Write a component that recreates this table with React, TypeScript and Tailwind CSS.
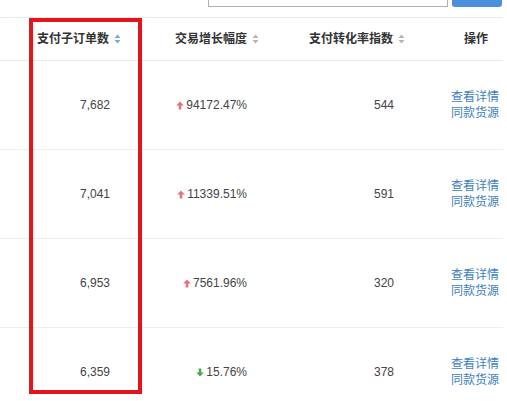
import React from "react";

const font = { fontFamily: '"Liberation Sans", "Noto Sans CJK SC", sans-serif' };

function Sort({ active }: { active?: boolean }) {
  return (
    <svg width="7" height="10" viewBox="0 0 7 10" className="ml-[5px]">
      <path d="M3.5 0.5 L6.5 4 L0.5 4 Z" fill={active ? "#7aa7d6" : "#b5b5b5"} />
      <path d="M3.5 9.5 L6.5 6 L0.5 6 Z" fill={active ? "#7aa7d6" : "#b5b5b5"} />
    </svg>
  );
}

function Up() {
  return (
    <svg width="8" height="9" viewBox="0 0 8 9" className="mr-[2px]">
      <path d="M4 0.5 L7.8 4.5 L5.3 4.5 L5.3 8.5 L2.7 8.5 L2.7 4.5 L0.2 4.5 Z" fill="#e7727e" />
    </svg>
  );
}

function Down() {
  return (
    <svg width="8" height="9" viewBox="0 0 8 9" className="mr-[2px]">
      <path d="M4 8.5 L7.8 4.5 L5.3 4.5 L5.3 0.5 L2.7 0.5 L2.7 4.5 L0.2 4.5 Z" fill="#4ea64e" />
    </svg>
  );
}

const rows = [
  { a: "7,682", up: true, b: "94172.47%", c: "544" },
  { a: "7,041", up: true, b: "11339.51%", c: "591" },
  { a: "6,953", up: true, b: "7561.96%", c: "320" },
  { a: "6,359", up: false, b: "15.76%", c: "378" },
];

export default function App() {
  return (
    <div className="relative w-[507px] h-[401px] bg-white overflow-hidden text-[12px]" style={font}>
      <div className="h-[18px] w-[503px] border-b border-[#e8e8e8] relative">
        <div className="absolute left-[208px] top-[-10px] w-[240px] h-[17px] border border-[#b0b0b0] bg-white" />
        <div className="absolute left-[452px] top-[-10px] w-[50px] h-[17px] rounded-[3px] bg-[#4a90dc]" />
      </div>
      <div className="w-[503px] grid grid-cols-[145px_125px_150px_83px]">
        <div className="h-[43px] flex items-center pl-[37px] font-bold text-[#333] border-b border-[#ececec]">
          支付子订单数<Sort active />
        </div>
        <div className="h-[43px] flex items-center pl-[30px] font-bold text-[#333] border-b border-[#ececec]">
          交易增长幅度<Sort />
        </div>
        <div className="h-[43px] flex items-center pl-[39px] font-bold text-[#333] border-b border-[#ececec]">
          支付转化率指数<Sort />
        </div>
        <div className="h-[43px] flex items-center pl-[44px] font-bold text-[#333] border-b border-[#ececec]">
          操作
        </div>
        {rows.map((r, i) => (
          <React.Fragment key={i}>
            <div className="h-[89px] flex items-center justify-end pr-[35px] text-[#444] border-b border-[#eeeeee]">
              {r.a}
            </div>
            <div className="h-[89px] flex items-center justify-end pr-[23px] text-[#444] border-b border-[#eeeeee]">
              {r.up ? <Up /> : <Down />}
              {r.b}
            </div>
            <div className="h-[89px] flex items-center justify-end pr-[26px] text-[#444] border-b border-[#eeeeee]">
              {r.c}
            </div>
            <div className="h-[89px] flex flex-col justify-center pl-[31px] text-[#3d7fc1] leading-[16px] border-b border-[#eeeeee] whitespace-nowrap">
              <span>查看详情</span>
              <span>同款货源</span>
            </div>
          </React.Fragment>
        ))}
      </div>
      <div className="absolute left-[29px] top-[18px] w-[113px] h-[376px] border-[4px] border-[#e3141b]" />
    </div>
  );
}
